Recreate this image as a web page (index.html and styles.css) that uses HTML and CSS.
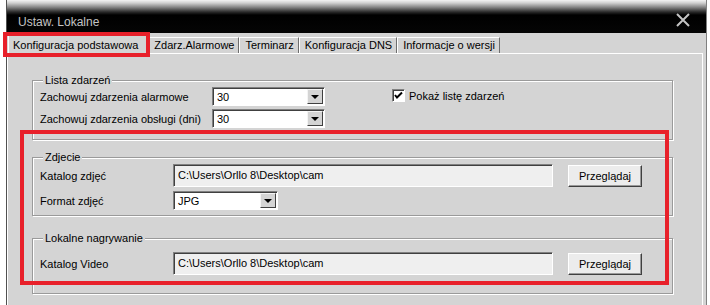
FILE: index.html
```html
<!DOCTYPE html>
<html lang="pl">
<head>
    <meta charset="UTF-8">
    <title>Ustaw. Lokalne</title>
    <link rel="stylesheet" href="styles.css">
</head>
<body>
    <div class="window">
        <div class="titlebar">
            <span class="title">Ustaw. Lokalne</span>
            <svg class="close" width="14" height="14" viewBox="0 0 14 14">
                <path d="M1 1 L13 13 M13 1 L1 13" stroke="#c4c4c4" stroke-width="2" fill="none"/>
            </svg>
        </div>

        <div class="tabs">
            <span class="tab active">Konfiguracja podstawowa</span>
            <span class="tab">Zdarz.Alarmowe</span>
            <span class="tab">Terminarz</span>
            <span class="tab">Konfiguracja DNS</span>
            <span class="tab">Informacje o wersji</span>
        </div>

        <div class="panel">
            <fieldset class="group group-events">
                <legend>Lista zdarzeń</legend>
                <div class="row">
                    <span class="label wide">Zachowuj zdarzenia alarmowe</span>
                    <div class="combo"><span>30</span><i class="drop"></i></div>
                    <label class="check"><span class="box">
                        <svg width="9" height="9" viewBox="0 0 9 9"><path d="M1 4 L3 6.5 L8 1.5" stroke="#000" stroke-width="2" fill="none"/></svg>
                    </span>Pokaż listę zdarzeń</label>
                </div>
                <div class="row">
                    <span class="label wide">Zachowuj zdarzenia obsługi (dni)</span>
                    <div class="combo"><span>30</span><i class="drop"></i></div>
                </div>
            </fieldset>

            <fieldset class="group group-photo">
                <legend>Zdjecie</legend>
                <div class="row">
                    <span class="label">Katalog zdjęć</span>
                    <div class="path">C:\Users\Orllo 8\Desktop\cam</div>
                    <button class="btn">Przeglądaj</button>
                </div>
                <div class="row row-format">
                    <span class="label">Format zdjęć</span>
                    <div class="combo combo-small"><span>JPG</span><i class="drop"></i></div>
                </div>
            </fieldset>

            <fieldset class="group group-video">
                <legend>Lokalne nagrywanie</legend>
                <div class="row">
                    <span class="label">Katalog Video</span>
                    <div class="path">C:\Users\Orllo 8\Desktop\cam</div>
                    <button class="btn">Przeglądaj</button>
                </div>
            </fieldset>
        </div>
    </div>

    <!-- zaznaczenia (czerwone ramki) -->
    <div class="mark mark-tab"></div>
    <div class="mark mark-groups"></div>
</body>
</html>
```

FILE: styles.css
```css
body {
    margin: 0;
    background-color: #fff;
    font-family: "Liberation Sans", Arial, sans-serif;
    font-size: 11px;
    color: #000;
    position: relative;
    height: 305px;
    overflow: hidden;
}

.window {
    margin-left: 6px;
    width: 699px;
    height: 305px;
    border-left: 1px solid #505050;
    border-right: 1px solid #808080;
    background-color: #d4d4d4;
}

.titlebar {
    height: 33px;
    display: flex;
    align-items: center;
    justify-content: space-between;
    padding: 11px 16px 0 11px;
    box-sizing: border-box;
    background: linear-gradient(#f4f4f4 0, #d0d0d0 3px, #8a8a8a 7px, #2a2a2a 12px, #000 15px, #050505 100%);
}

.title {
    color: #c4c4c4;
    font-size: 12px;
}

.close {
    margin-top: -5px;
}

.tabs {
    height: 20px;
    display: flex;
    align-items: flex-end;
    padding-left: 1px;
}

.tab {
    height: 15px;
    line-height: 15px;
    padding: 0 4px 0 5px;
    border-left: 1px solid #fff;
    border-top: 1px solid #fff;
    border-right: 1px solid #6e6e6e;
    white-space: nowrap;
}

.tab.active {
    height: 18px;
    line-height: 18px;
    padding: 0 9px 0 4px;
    margin-bottom: -1px;
    background-color: #d4d4d4;
    border-right: 1px solid #6e6e6e;
    position: relative;
}

.panel {
    margin-right: 3px;
    height: 251px;
    border-top: 1px solid #fff;
    border-left: 1px solid #fff;
    border-right: 1px solid #fff;
    padding: 0 29px 0 24px;
}

.group {
    margin: 0;
    padding: 0 8px 11px 7px;
    border: 1px solid #9a9a9a;
    box-shadow: inset 1px 1px 0 #fff, 1px 1px 0 #fff;
    min-width: 0;
}

.group legend {
    padding: 0 2px;
    margin-left: 3px;
    line-height: 13px;
    background-color: #d4d4d4;
}

.group-events {
    margin-top: 20px;
}

.group-photo {
    margin-top: 11px;
    padding-bottom: 5px;
}

.group-video {
    margin-top: 16px;
    padding-top: 7px;
    padding-bottom: 18px;
}

.row {
    display: flex;
    align-items: center;
    height: 19px;
    margin-bottom: 3px;
}

.row:last-child {
    margin-bottom: 0;
}

.group-photo .row,
.group-video .row {
    height: 23px;
}

.group-photo .row-format {
    height: 19px;
    margin-top: 4px;
}

.label {
    width: 133px;
    flex-shrink: 0;
}

.label.wide {
    width: 172px;
}

.combo {
    width: 113px;
    height: 19px;
    box-sizing: border-box;
    background-color: #fff;
    border: 1px solid;
    border-color: #808080 #fff #fff #808080;
    box-shadow: inset 1px 1px 0 #404040;
    display: flex;
    align-items: center;
    justify-content: space-between;
    padding: 1px 1px 1px 4px;
}

.combo-small {
    width: 105px;
}

.drop {
    width: 16px;
    height: 15px;
    box-sizing: border-box;
    background-color: #d4d4d4;
    border: 1px solid;
    border-color: #f4f4f4 #404040 #404040 #f4f4f4;
    position: relative;
}

.drop::after {
    content: "";
    position: absolute;
    left: 3px;
    top: 5px;
    border-left: 4px solid transparent;
    border-right: 4px solid transparent;
    border-top: 4px solid #000;
}

.check {
    display: flex;
    align-items: center;
    margin-left: 67px;
    margin-top: -2px;
}

.box {
    width: 11px;
    height: 11px;
    background-color: #fff;
    border: 1px solid;
    border-color: #808080 #fff #fff #808080;
    box-shadow: inset 1px 1px 0 #404040;
    display: flex;
    align-items: center;
    justify-content: center;
    margin-right: 4px;
}

.path {
    width: 380px;
    height: 23px;
    box-sizing: border-box;
    background-color: #efefef;
    border: 1px solid;
    border-color: #808080 #fff #fff #808080;
    box-shadow: inset 1px 1px 0 #404040;
    line-height: 21px;
    padding-left: 4px;
}

.btn {
    margin-left: 15px;
    width: 74px;
    height: 22px;
    font-family: inherit;
    font-size: 11px;
    background-color: #ececec;
    border: 1px solid;
    border-color: #fff #404040 #404040 #fff;
    box-shadow: inset -1px -1px 0 #9a9a9a;
    padding: 0;
}

.mark {
    position: absolute;
    border: 4px solid #e8202a;
    box-sizing: border-box;
}

.mark-tab {
    left: 3px;
    top: 32px;
    width: 147px;
    height: 25px;
}

.mark-groups {
    left: 20px;
    top: 130px;
    width: 649px;
    height: 155px;
}
```
